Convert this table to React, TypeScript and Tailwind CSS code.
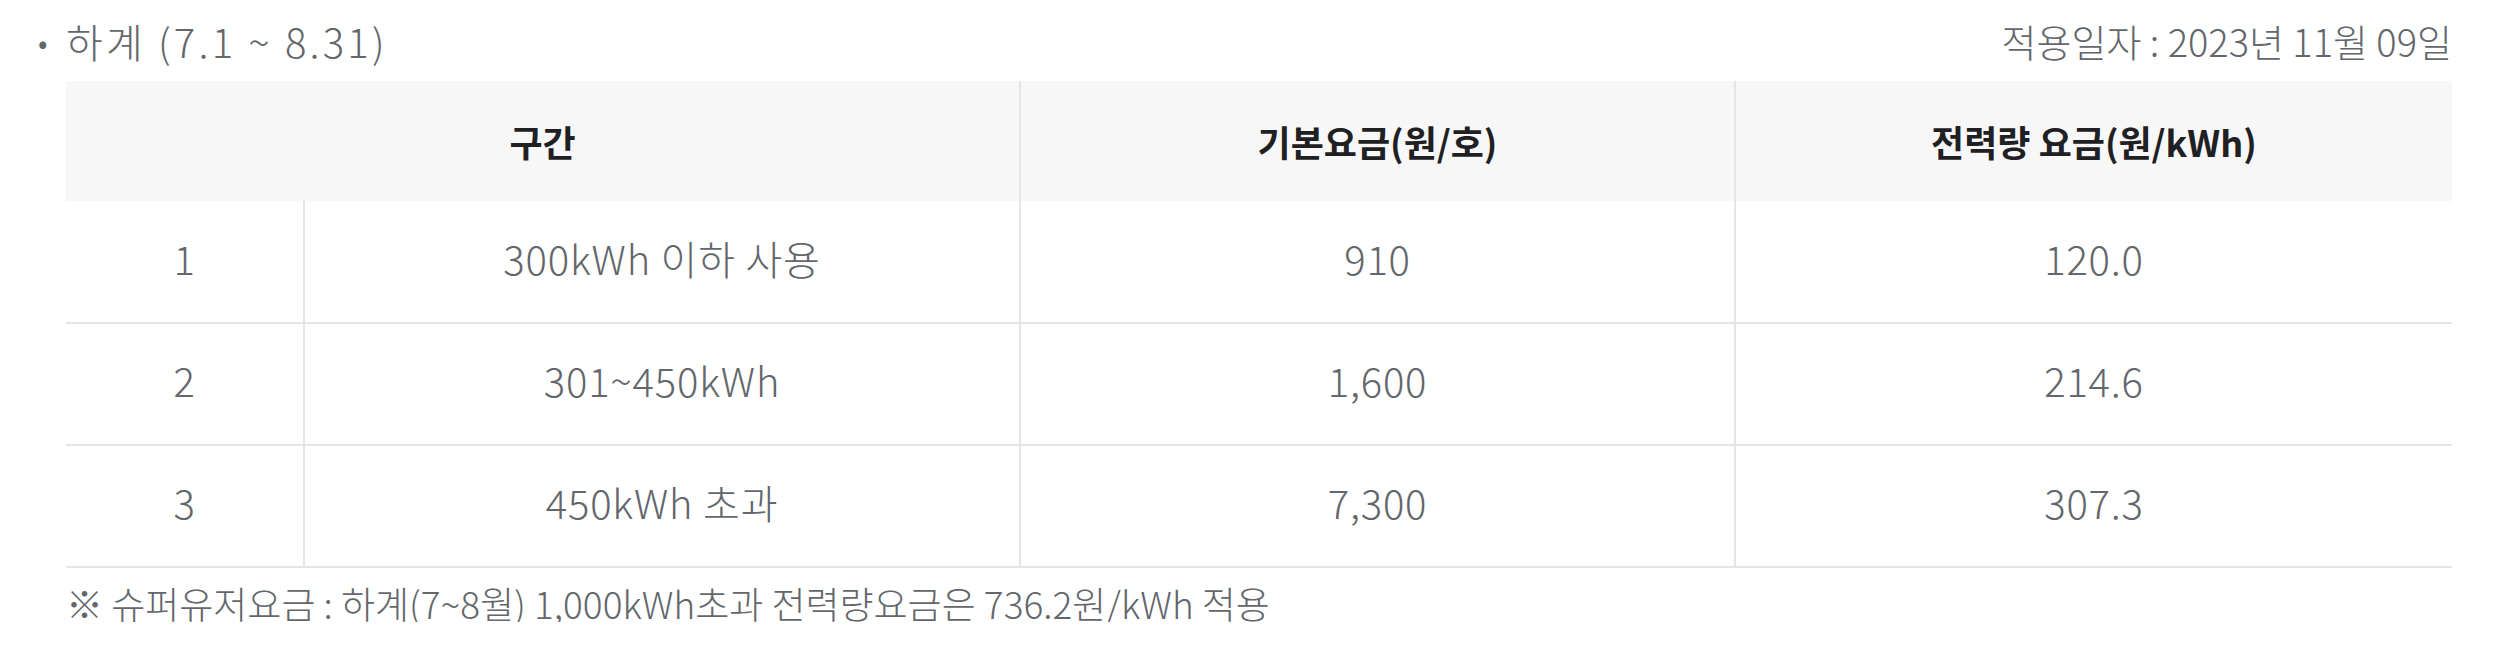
const rows = [
  { no: "1", range: "300kWh 이하 사용", base: "910", rate: "120.0" },
  { no: "2", range: "301~450kWh", base: "1,600", rate: "214.6" },
  { no: "3", range: "450kWh 초과", base: "7,300", rate: "307.3" },
];

const SummerRates = () => {
  return (
    <div className="w-full bg-white font-['Noto_Sans_CJK_KR','Noto_Sans',sans-serif] text-[#63666b]">
      <div className="pl-[66px] pr-[42px]">
        <div className="flex h-[81px] items-center justify-between">
          <h3 className="flex items-center text-[40px] font-light leading-none tracking-[0.08em]">
            <span className="-ml-[28px] w-[28px] text-[30px] tracking-normal">•</span>
            하계 (7.1 ~ 8.31)
          </h3>
          <p className="text-[38px] font-light leading-none">적용일자 : 2023년 11월 09일</p>
        </div>

        <table className="w-full table-fixed border-collapse text-center">
          <colgroup>
            <col className="w-[238px]" />
            <col className="w-[716px]" />
            <col className="w-[715px]" />
            <col />
          </colgroup>
          <thead>
            <tr className="h-[120px] bg-[#f7f7f7] text-[36px] font-bold text-[#1f2023]">
              <th colSpan={2} className="border-r-2 border-[#e3e5e8]">구간</th>
              <th className="border-r-2 border-[#e3e5e8]">기본요금(원/호)</th>
              <th>전력량 요금(원/kWh)</th>
            </tr>
          </thead>
          <tbody className="text-[40px] font-light tracking-[0.02em]">
            {rows.map((r) => (
              <tr key={r.no} className="h-[122px] border-b-2 border-[#e3e5e8]">
                <td className="border-r-2 border-[#e3e5e8] pb-[8px]">{r.no}</td>
                <td className="border-r-2 border-[#e3e5e8] pb-[8px]">{r.range}</td>
                <td className="border-r-2 border-[#e3e5e8] pb-[8px]">{r.base}</td>
                <td className="pb-[8px]">{r.rate}</td>
              </tr>
            ))}
          </tbody>
        </table>

        <p className="pt-[17px] text-[37px] font-light leading-none">
          ※ 슈퍼유저요금 : 하계(7~8월) 1,000kWh초과 전력량요금은 736.2원/kWh 적용
        </p>
      </div>
    </div>
  );
};

export default function App() {
  return <SummerRates />;
}
